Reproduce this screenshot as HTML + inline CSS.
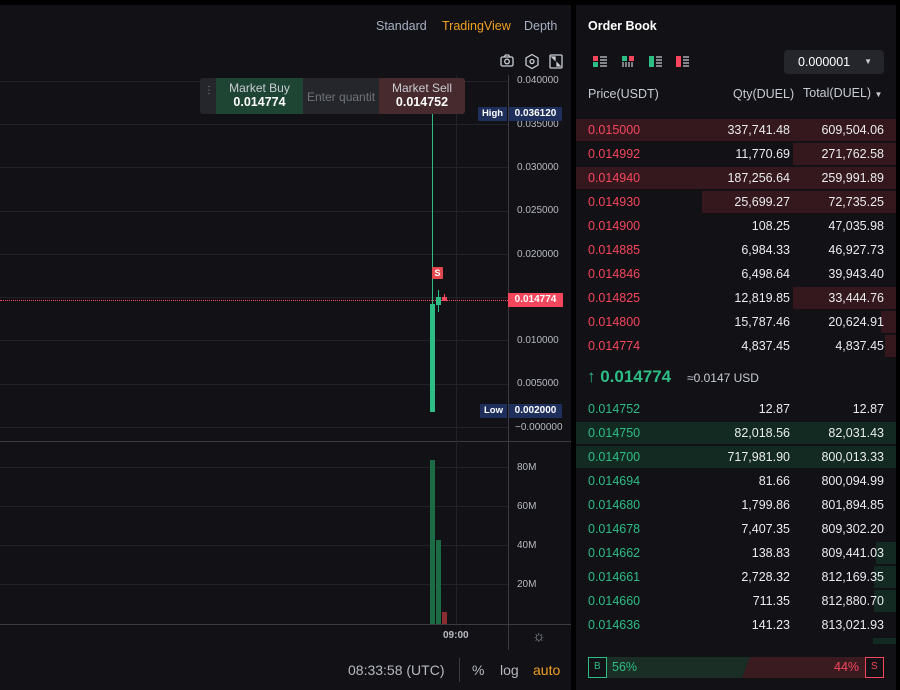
<!DOCTYPE html>
<html><head><style>
*{margin:0;padding:0;box-sizing:border-box}
body{width:900px;height:690px;background:#000;font-family:"Liberation Sans",sans-serif;position:relative;overflow:hidden;font-size:12px}
.a{position:absolute}
#chart{left:0;top:5px;width:571px;height:685px;background:#111116}
#ob{left:576px;top:5px;width:320px;height:685px;background:#111116}
.hl{position:absolute;left:0;width:508px;height:1px;background:#22232a}
.ax{position:absolute;left:517px;color:#b7bac1;font-size:10px}
.row{position:absolute;left:576px;width:320px;height:24px;line-height:24px;font-size:12.5px}
.row .p{position:absolute;left:12px}
.row .q{position:absolute;right:106px;color:#eaecef}
.row .t{position:absolute;right:12px;color:#eaecef}
.row .bg{position:absolute;top:1px;bottom:1px;right:0}
.s .p{color:#f6465d}.s .bg{background:#35181d}
.b .p{color:#2ebd85}.b .bg{background:#132a22}
</style></head><body>
<div class="a" id="chart"></div>
<div class="a" id="ob"></div>
<!-- top tabs -->
<div class="a" style="left:376px;top:19px;color:#a7b1c2;font-size:12.5px">Standard</div>
<div class="a" style="left:442px;top:19px;color:#f0a020;font-size:12.5px">TradingView</div>
<div class="a" style="left:524px;top:19px;color:#a7b1c2;font-size:12.5px">Depth</div>
<!-- icons -->
<svg class="a" style="left:499px;top:53px" width="66" height="18" fill="none" stroke="#c8ccd4" stroke-width="1.3">
<rect x="2" y="4" width="12" height="9" rx="1.5"/><path d="M5 4l1.5-2h3L11 4"/><circle cx="8" cy="8.5" r="2.3"/>
<path d="M33 1.5l6 3.5v7l-6 3.5-6-3.5v-7z"/><circle cx="33" cy="8.5" r="2"/>
<rect x="51" y="2" width="12" height="13" rx="1"/><path d="M53 4h3v3zM61 13h-3v-3z" fill="#c8ccd4"/>
</svg>
<!-- grid -->
<div class="hl" style="top:81px"></div><div class="hl" style="top:124px"></div><div class="hl" style="top:167px"></div>
<div class="hl" style="top:211px"></div><div class="hl" style="top:254px"></div><div class="hl" style="top:297px"></div>
<div class="hl" style="top:340px"></div><div class="hl" style="top:384px"></div><div class="hl" style="top:427px"></div>
<div class="a" style="left:0;top:441px;width:571px;height:1px;background:#3a3b42"></div>
<div class="hl" style="top:467px"></div><div class="hl" style="top:506px"></div><div class="hl" style="top:545px"></div><div class="hl" style="top:584px"></div>
<div class="a" style="left:0;top:624px;width:571px;height:1px;background:#3a3b42"></div>
<div class="a" style="left:456px;top:75px;width:1px;height:549px;background:#22232a"></div>
<div class="a" style="left:508px;top:75px;width:1px;height:575px;background:#3a3b42"></div>
<div class="a" style="left:459px;top:658px;width:1px;height:24px;background:#3a3b42"></div>
<!-- axis labels -->
<div class="ax" style="top:75px">0.040000</div><div class="ax" style="top:119px">0.035000</div>
<div class="ax" style="top:162px">0.030000</div><div class="ax" style="top:205px">0.025000</div>
<div class="ax" style="top:249px">0.020000</div><div class="ax" style="top:335px">0.010000</div>
<div class="ax" style="top:378px">0.005000</div><div class="ax" style="top:422px;left:515px">−0.000000</div>
<div class="ax" style="top:462px">80M</div><div class="ax" style="top:501px">60M</div>
<div class="ax" style="top:540px">40M</div><div class="ax" style="top:579px">20M</div>
<div class="a" style="left:443px;top:630px;color:#b7bac1;font-size:10px;font-weight:bold">09:00</div>
<div class="a" style="left:532px;top:628px;color:#9a9ea6;font-size:15px">☼</div>
<!-- high/low -->
<div class="a" style="left:478px;top:107px;width:29px;height:14px;background:#1e2f5c;color:#fff;font-size:9.5px;font-weight:bold;line-height:14px;text-align:center">High</div>
<div class="a" style="left:509px;top:107px;width:53px;height:14px;background:#1e2f5c;color:#fff;font-size:10px;font-weight:bold;line-height:14px;text-align:center">0.036120</div>
<div class="a" style="left:480px;top:404px;width:27px;height:14px;background:#1e2f5c;color:#fff;font-size:9.5px;font-weight:bold;line-height:14px;text-align:center">Low</div>
<div class="a" style="left:509px;top:404px;width:53px;height:14px;background:#1e2f5c;color:#fff;font-size:10px;font-weight:bold;line-height:14px;text-align:center">0.002000</div>
<!-- price line -->
<div class="a" style="left:0;top:300px;width:508px;height:0;border-top:1px dotted #f6465d"></div>
<div class="a" style="left:508px;top:293px;width:55px;height:14px;background:#f6465d;color:#fff;font-size:10px;font-weight:bold;line-height:14px;text-align:center">0.014774</div>
<!-- candles -->
<div class="a" style="left:432px;top:112px;width:1px;height:192px;background:#2ebd85"></div>
<div class="a" style="left:430px;top:304px;width:5px;height:108px;background:#2ebd85"></div>
<div class="a" style="left:438px;top:290px;width:1px;height:22px;background:#2ebd85"></div>
<div class="a" style="left:436px;top:297px;width:5px;height:8px;background:#2ebd85"></div>
<div class="a" style="left:444px;top:294px;width:1px;height:4px;background:#f6465d"></div>
<div class="a" style="left:442px;top:297px;width:5px;height:4px;background:#f6465d"></div>
<div class="a" style="left:432px;top:267px;width:11px;height:12px;background:#e0474e;color:#fff;font-size:9px;font-weight:bold;text-align:center;line-height:12px;border-radius:1px">S</div>
<!-- volume -->
<div class="a" style="left:430px;top:460px;width:5px;height:164px;background:#1d6b44"></div>
<div class="a" style="left:436px;top:540px;width:5px;height:84px;background:#1d6b44"></div>
<div class="a" style="left:442px;top:612px;width:5px;height:12px;background:#8a2d31"></div>
<!-- market widget -->
<div class="a" style="left:200px;top:78px;width:265px;height:36px;background:#24262b;border-radius:3px"></div>
<div class="a" style="left:204px;top:88px;color:#8a8e96;font-size:10px;line-height:5px;letter-spacing:-1px">⋮⋮</div>
<div class="a" style="left:216px;top:78px;width:87px;height:36px;background:#1e4433;color:#fff;text-align:center">
<div style="font-size:12px;color:#c8ccd4;margin-top:3px">Market Buy</div><div style="font-size:12.5px;font-weight:bold">0.014774</div></div>
<div class="a" style="left:307px;top:90px;color:#6f737b;font-size:12px;width:68px;overflow:hidden;white-space:nowrap">Enter quantity</div>
<div class="a" style="left:379px;top:78px;width:86px;height:36px;background:#472a2d;color:#fff;text-align:center;border-radius:0 3px 3px 0">
<div style="font-size:12px;color:#c8ccd4;margin-top:3px">Market Sell</div><div style="font-size:12.5px;font-weight:bold">0.014752</div></div>
<!-- footer -->
<div class="a" style="left:348px;top:662px;color:#b7bac1;font-size:14px">08:33:58 (UTC)</div>
<div class="a" style="left:472px;top:662px;color:#b7bac1;font-size:14px">%</div>
<div class="a" style="left:500px;top:662px;color:#b7bac1;font-size:14px">log</div>
<div class="a" style="left:533px;top:662px;color:#f0a020;font-size:14px">auto</div>
<!-- order book header -->
<div class="a" style="left:588px;top:19px;color:#fff;font-size:12.5px;font-weight:bold">Order Book</div>
<svg class="a" style="left:593px;top:55px" width="100" height="14">
<rect x="0" y="1" width="5" height="5" fill="#f6465d"/><rect x="0" y="7" width="5" height="5" fill="#2ebd85"/>
<path d="M7 2h7M7 5h7M7 8h7M7 11h7" stroke="#c8ccd4" stroke-width="1.3"/>
<rect x="29" y="1" width="5" height="5" fill="#2ebd85"/><rect x="36" y="1" width="5" height="5" fill="#f6465d"/>
<path d="M30 7v5M33 7v5M36 7v5M39 7v5" stroke="#c8ccd4" stroke-width="1.2"/>
<rect x="56" y="1" width="5" height="11" fill="#2ebd85"/><path d="M63 2h6M63 5h6M63 8h6M63 11h6" stroke="#c8ccd4" stroke-width="1.3"/>
<rect x="83" y="1" width="5" height="11" fill="#f6465d"/><path d="M90 2h6M90 5h6M90 8h6M90 11h6" stroke="#c8ccd4" stroke-width="1.3"/>
</svg>
<div class="a" style="left:784px;top:50px;width:100px;height:24px;background:#24262b;border-radius:4px;color:#fff;font-size:12.5px;line-height:24px;padding-left:14px">0.000001<span style="position:absolute;right:12px;font-size:8px;color:#c8ccd4">▼</span></div>
<div class="a" style="left:588px;top:87px;color:#c8ccd4;font-size:12.5px">Price(USDT)</div>
<div class="a" style="left:733px;top:87px;color:#c8ccd4;font-size:12.5px">Qty(DUEL)</div>
<div class="a" style="left:803px;top:86px;color:#c8ccd4;font-size:12.5px">Total(DUEL) <span style="font-size:8px">▼</span></div>
<!-- asks -->
<div class="row s" style="top:118px"><div class="bg" style="left:0"></div><span class="p">0.015000</span><span class="q">337,741.48</span><span class="t">609,504.06</span></div>
<div class="row s" style="top:142px"><div class="bg" style="left:217px"></div><span class="p">0.014992</span><span class="q">11,770.69</span><span class="t">271,762.58</span></div>
<div class="row s" style="top:166px"><div class="bg" style="left:0"></div><span class="p">0.014940</span><span class="q">187,256.64</span><span class="t">259,991.89</span></div>
<div class="row s" style="top:190px"><div class="bg" style="left:126px"></div><span class="p">0.014930</span><span class="q">25,699.27</span><span class="t">72,735.25</span></div>
<div class="row s" style="top:214px"><span class="p">0.014900</span><span class="q">108.25</span><span class="t">47,035.98</span></div>
<div class="row s" style="top:238px"><span class="p">0.014885</span><span class="q">6,984.33</span><span class="t">46,927.73</span></div>
<div class="row s" style="top:262px"><span class="p">0.014846</span><span class="q">6,498.64</span><span class="t">39,943.40</span></div>
<div class="row s" style="top:286px"><div class="bg" style="left:217px"></div><span class="p">0.014825</span><span class="q">12,819.85</span><span class="t">33,444.76</span></div>
<div class="row s" style="top:310px"><div class="bg" style="left:305px"></div><span class="p">0.014800</span><span class="q">15,787.46</span><span class="t">20,624.91</span></div>
<div class="row s" style="top:334px"><div class="bg" style="left:309px"></div><span class="p">0.014774</span><span class="q">4,837.45</span><span class="t">4,837.45</span></div>
<div class="a" style="left:587px;top:367px;color:#2ebd85;font-size:17px;font-weight:bold">↑ 0.014774</div>
<div class="a" style="left:687px;top:371px;color:#c8ccd4;font-size:12px">≈0.0147 USD</div>
<!-- bids -->
<div class="row b" style="top:397px"><span class="p">0.014752</span><span class="q">12.87</span><span class="t">12.87</span></div>
<div class="row b" style="top:421px"><div class="bg" style="left:0"></div><span class="p">0.014750</span><span class="q">82,018.56</span><span class="t">82,031.43</span></div>
<div class="row b" style="top:445px"><div class="bg" style="left:0"></div><span class="p">0.014700</span><span class="q">717,981.90</span><span class="t">800,013.33</span></div>
<div class="row b" style="top:469px"><span class="p">0.014694</span><span class="q">81.66</span><span class="t">800,094.99</span></div>
<div class="row b" style="top:493px"><span class="p">0.014680</span><span class="q">1,799.86</span><span class="t">801,894.85</span></div>
<div class="row b" style="top:517px"><span class="p">0.014678</span><span class="q">7,407.35</span><span class="t">809,302.20</span></div>
<div class="row b" style="top:541px"><div class="bg" style="left:300px"></div><span class="p">0.014662</span><span class="q">138.83</span><span class="t">809,441.03</span></div>
<div class="row b" style="top:565px"><div class="bg" style="left:298px"></div><span class="p">0.014661</span><span class="q">2,728.32</span><span class="t">812,169.35</span></div>
<div class="row b" style="top:589px"><div class="bg" style="left:298px"></div><span class="p">0.014660</span><span class="q">711.35</span><span class="t">812,880.70</span></div>
<div class="row b" style="top:613px"><span class="p">0.014636</span><span class="q">141.23</span><span class="t">813,021.93</span></div>
<div class="a" style="left:873px;top:638px;width:23px;height:6px;background:#132a22"></div>
<!-- ratio bar -->
<svg class="a" style="left:588px;top:657px" width="297" height="21">
<polygon points="18,0 162,0 154,21 18,21" fill="#1b2e25"/>
<polygon points="162,0 278,0 278,21 154,21" fill="#3a1c20"/>
<rect x="0.5" y="0.5" width="18" height="20" fill="none" stroke="#2ebd85"/>
<rect x="277.5" y="0.5" width="18" height="20" fill="none" stroke="#f6465d"/>
</svg>
<div class="a" style="left:594px;top:661px;color:#2ebd85;font-size:10px">B</div>
<div class="a" style="left:612px;top:660px;color:#2ebd85;font-size:12.5px">56%</div>
<div class="a" style="left:834px;top:660px;color:#f6465d;font-size:12.5px">44%</div>
<div class="a" style="left:871px;top:661px;color:#f6465d;font-size:10px">S</div>
</body></html>
